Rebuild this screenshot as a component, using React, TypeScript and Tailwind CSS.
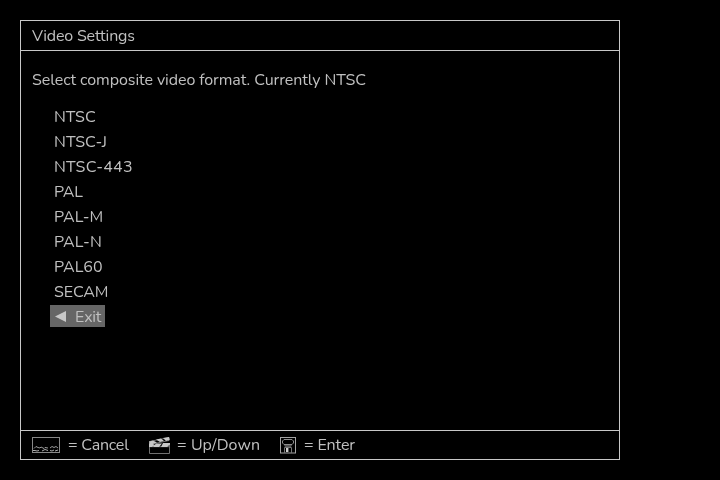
import React from "react";

const formats = [
  { name: "NTSC", spacing: "tracking-normal" },
  { name: "NTSC-J", spacing: "tracking-[0.05px]" },
  { name: "NTSC-443", spacing: "tracking-[0.25px]" },
  { name: "PAL", spacing: "tracking-[-0.15px]" },
  { name: "PAL-M", spacing: "tracking-normal" },
  { name: "PAL-N", spacing: "tracking-[0.1px]" },
  { name: "PAL60", spacing: "tracking-normal" },
  { name: "SECAM", spacing: "tracking-[-0.12px]" },
];

function CancelIcon() {
  return (
    <svg width="28" height="16" viewBox="0 0 28 16" fill="none" stroke="#c0c0c0">
      <rect x="0.5" y="0.5" width="27" height="15" stroke="#888888" />
      <path d="M2 11.500l2-2 2 1 2 .5 1-1 3 1.500 1-1 3 .5M18 11l2-1.500 2 1 2-1 2 1.500" strokeWidth="0.8" />
      <path d="M1 13.500h2l2 .5 2-.5M10 14l3-1.500 3 1M18 13.500l2 .5 2-1M23 14l3-1" strokeWidth="0.9" />
    </svg>
  );
}

function ClapperIcon() {
  return (
    <svg width="21" height="17" viewBox="0 0 21 17" fill="none">
      <path d="M.5 6v10.500h20V6" stroke="#707070" />
      <path d="M.5 4.500L20 .5v3L1 7.500z" stroke="#8a8a8a" strokeWidth="0.8" />
      <path d="M0 4.500l4-1 4 2L1 8zM7 2.500l5-1 3 2.500-4 1zM14 1l6-1 .7 3-3.700 1z" fill="#c8c8c8" />
      <path d="M1 9.700h19" stroke="#8a8a8a" strokeWidth="0.8" />
      <path d="M0 6.500h3l3 1.500-3 2H0zM7 6.500h6l-3 3.500H4zM14 6h7v1.500L18 10h-6z" fill="#c8c8c8" />
    </svg>
  );
}

function EnterIcon() {
  return (
    <svg width="16" height="17" viewBox="0 0 16 17" fill="none">
      <rect x="0.500" y="0.500" width="15" height="15.500" stroke="#a4a4a4" />
      <path d="M4 2.500h8l1.500 1.500v2L12 7.500H4L2.500 6V4z" stroke="#8c8c8c" />
      <path d="M4 8h8l-1 2H5z" fill="#555555" />
      <path d="M4.500 16v-5.500h7V16" stroke="#777777" />
      <path d="M6 11h3v4H6z" fill="#d0d0d0" />
      <path d="M8 11h1v4H8z" fill="#555" />
    </svg>
  );
}

export default function App() {
  return (
    <div className="h-[480px] w-[720px] overflow-hidden bg-black p-5 font-['Nunito','Lato',sans-serif] text-[16px] leading-[25px] font-normal whitespace-nowrap text-[#c0c0c0]">
      <main className="flex h-[440px] w-[600px] flex-col border border-[#c8c8c8] will-change-transform">
        <header className="flex h-[30px] items-center border-b border-[#c8c8c8] pt-[2px] pl-[11px]">
          <h1 className="font-normal tracking-[-0.18px]">Video Settings</h1>
        </header>
        <section className="flex-1 pt-[17px] pl-[11px]">
          <p className="tracking-[-0.08px]">Select composite video format. Currently NTSC</p>
          <ul className="mt-3 pl-[22px]">
            {formats.map((f) => (
              <li key={f.name} className="h-[25px]">
                <span className={f.spacing}>{f.name}</span>
              </li>
            ))}
          </ul>
          <button className="ml-[18px] flex h-[22px] w-[55px] items-center bg-[#666666] pl-[5px]">
            <svg width="11" height="12" viewBox="0 0 11 12" fill="#c8c8c8">
              <path d="M0 6.500L11 1v11z" />
            </svg>
            <span className="ml-[9px] pt-[2px] tracking-[-0.2px]">Exit</span>
          </button>
        </section>
        <footer className="flex h-[29px] items-center border-t border-[#c8c8c8] pl-[11px]">
          <div className="flex w-[117px] items-center gap-2">
            <CancelIcon />
            <span className="tracking-[-0.2px]">= Cancel</span>
          </div>
          <div className="flex w-[131px] items-center gap-[7px]">
            <ClapperIcon />
            <span className="tracking-[0.08px]">= Up/Down</span>
          </div>
          <div className="flex items-center gap-2">
            <EnterIcon />
            <span className="tracking-[-0.15px]">= Enter</span>
          </div>
        </footer>
      </main>
    </div>
  );
}
